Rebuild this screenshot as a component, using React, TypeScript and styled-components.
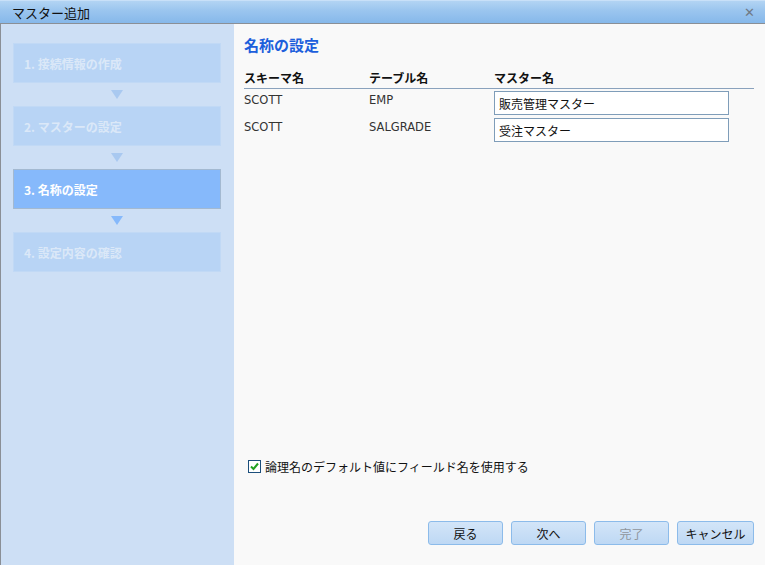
import React, { useState } from 'react';
import styled, { createGlobalStyle } from 'styled-components';

const GlobalStyle = createGlobalStyle`
  html, body {
    margin: 0;
    padding: 0;
    background: #f9f9f9;
  }
  body {
    font-family: "DejaVu Sans", "Noto Sans CJK JP", sans-serif;
    font-size: 12px;
    color: #111;
  }
`;

const Window = styled.div`
  width: 765px;
  height: 565px;
  display: flex;
  flex-direction: column;
  overflow: hidden;
`;

const TitleBar = styled.div`
  height: 24px;
  box-sizing: border-box;
  display: flex;
  align-items: center;
  justify-content: space-between;
  padding: 1px 10px 0 12px;
  background: linear-gradient(#b2d4f3, #9cc6ef 40%, #86b8ea);
  border-top: 1px solid #c8e0f8;
  border-bottom: 1px solid #8a8f96;
`;

const Title = styled.span`
  font-family: "Noto Sans CJK JP", sans-serif;
  font-size: 13px;
  color: #111;
`;

const CloseButton = styled.button`
  background: none;
  border: none;
  padding: 0;
  color: #707a86;
  font-size: 13px;
  line-height: 1;
  cursor: pointer;
`;

const Body = styled.div`
  flex: 1;
  display: flex;
  min-height: 0;
`;

const Sidebar = styled.div`
  width: 234px;
  background: #cddff5;
  border-left: 1px solid #8a8f96;
  padding: 19px 13px 0 12px;
  box-sizing: border-box;
  display: flex;
  flex-direction: column;
`;

const Step = styled.div<{ $active?: boolean }>`
  height: 40px;
  box-sizing: border-box;
  display: flex;
  align-items: center;
  padding-left: 10px;
  font-family: "Noto Sans CJK JP", sans-serif;
  font-weight: bold;
  font-size: 12px;
  color: ${p => (p.$active ? '#ffffff' : '#dbe8f8')};
  background: ${p => (p.$active ? '#86b9fb' : '#b8d4f5')};
  border: 1px solid ${p => (p.$active ? '#a3b9d1' : '#c1d9f5')};
`;

const Arrow = styled.div<{ $active?: boolean }>`
  height: 23px;
  display: flex;
  align-items: center;
  justify-content: center;
  &::after {
    content: '';
    width: 0;
    height: 0;
    border-left: 6px solid transparent;
    border-right: 6px solid transparent;
    border-top: 9px solid ${p => (p.$active ? '#86b9fb' : '#a9c9f0')};
  }
`;

const Content = styled.div`
  flex: 1;
  display: flex;
  flex-direction: column;
  padding: 11px 11px 20px 10px;
  background: #f9f9f9;
`;

const Heading = styled.h2`
  margin: 0 0 15px;
  font-family: "Noto Sans CJK JP", sans-serif;
  font-size: 15px;
  font-weight: bold;
  color: #1d5fdc;
  line-height: 20px;
`;

const TableHead = styled.div`
  display: grid;
  grid-template-columns: 125px 125px 235px;
  border-bottom: 1px solid #8aa2bd;
  padding-bottom: 2px;
`;

const HeadCell = styled.div`
  font-family: "Noto Sans CJK JP", sans-serif;
  font-weight: bold;
  font-size: 12px;
  line-height: 16px;
`;

const TableBody = styled.div`
  display: flex;
  flex-direction: column;
  gap: 3px;
  padding-top: 2px;
`;

const TableRow = styled.div`
  display: grid;
  grid-template-columns: 125px 125px 235px;
  align-items: start;
`;

const Cell = styled.div`
  font-size: 11.5px;
  line-height: 16px;
  padding-top: 1px;
  color: #333;
`;

const NameInput = styled.input`
  width: 235px;
  height: 24px;
  box-sizing: border-box;
  border: 1px solid #7f9db9;
  background: #fff;
  padding: 0 4px;
  font-family: "Noto Sans CJK JP", sans-serif;
  font-size: 12px;
  color: #111;
  outline: none;
`;

const Spacer = styled.div`
  flex: 1;
`;

const CheckRow = styled.label`
  display: flex;
  align-items: center;
  gap: 4px;
  margin-left: 4px;
  margin-bottom: 46px;
  font-family: "Noto Sans CJK JP", sans-serif;
  font-size: 12px;
  cursor: pointer;
`;

const Box = styled.span`
  width: 13px;
  height: 13px;
  box-sizing: border-box;
  border: 1px solid #1c4f7c;
  background: #fff;
  display: flex;
  align-items: center;
  justify-content: center;
`;

const Buttons = styled.div`
  display: flex;
  justify-content: flex-end;
  gap: 8px;
`;

const Button = styled.button<{ $wide?: boolean }>`
  width: ${p => (p.$wide ? '77px' : '75px')};
  height: 24px;
  border: 1px solid #8cbbea;
  border-radius: 3px;
  background: linear-gradient(#d3e5f8, #bed8f4);
  font-family: "Noto Sans CJK JP", sans-serif;
  font-size: 12px;
  color: #111;
  cursor: pointer;
  &:disabled {
    color: #8f959c;
    cursor: default;
  }
`;

const steps = ['1. 接続情報の作成', '2. マスターの設定', '3. 名称の設定', '4. 設定内容の確認'];
const activeStep = 2;

const rows = [
  { schema: 'SCOTT', table: 'EMP', master: '販売管理マスター' },
  { schema: 'SCOTT', table: 'SALGRADE', master: '受注マスター' },
];

const App: React.FC = () => {
  const [names, setNames] = useState(rows.map(r => r.master));
  const [useField, setUseField] = useState(true);

  return (
    <>
      <GlobalStyle />
      <Window>
        <TitleBar>
          <Title>マスター追加</Title>
          <CloseButton>✕</CloseButton>
        </TitleBar>
        <Body>
          <Sidebar>
            {steps.map((s, i) => (
              <React.Fragment key={s}>
                {i > 0 && <Arrow $active={i === activeStep + 1} />}
                <Step $active={i === activeStep}>{s}</Step>
              </React.Fragment>
            ))}
          </Sidebar>
          <Content>
            <Heading>名称の設定</Heading>
            <TableHead>
              <HeadCell>スキーマ名</HeadCell>
              <HeadCell>テーブル名</HeadCell>
              <HeadCell>マスター名</HeadCell>
            </TableHead>
            <TableBody>
              {rows.map((r, i) => (
                <TableRow key={r.table}>
                  <Cell>{r.schema}</Cell>
                  <Cell>{r.table}</Cell>
                  <NameInput
                    value={names[i]}
                    onChange={e => setNames(names.map((n, j) => (j === i ? e.target.value : n)))}
                  />
                </TableRow>
              ))}
            </TableBody>
            <Spacer />
            <CheckRow onClick={() => setUseField(!useField)}>
              <Box>
                {useField && (
                  <svg width="9" height="9" viewBox="0 0 9 9">
                    <path d="M1 4.5 L3.5 7 L8 1.5" fill="none" stroke="#21a121" strokeWidth="2" />
                  </svg>
                )}
              </Box>
              論理名のデフォルト値にフィールド名を使用する
            </CheckRow>
            <Buttons>
              <Button>戻る</Button>
              <Button>次へ</Button>
              <Button disabled>完了</Button>
              <Button $wide>キャンセル</Button>
            </Buttons>
          </Content>
        </Body>
      </Window>
    </>
  );
};

export default App;
